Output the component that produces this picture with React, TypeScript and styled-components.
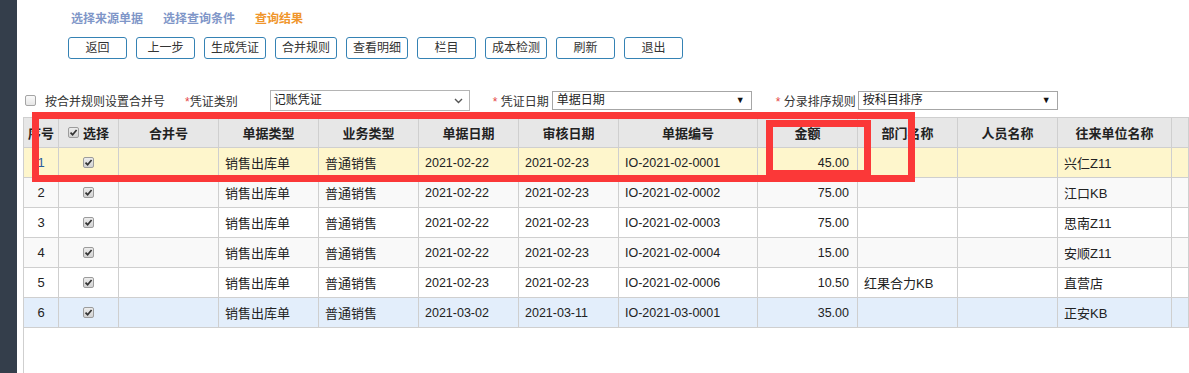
import React from 'react';
import styled, { createGlobalStyle } from 'styled-components';

const GlobalStyle = createGlobalStyle`
  html, body, #root {
    height: 100%;
  }
  body {
    margin: 0;
    background: #fff;
    color: #333;
    font-family: "Liberation Sans", "Noto Sans CJK SC", sans-serif;
    font-size: 12px;
  }
`

type Row = {
  no: number
  type: string
  biz: string
  date: string
  audit: string
  code: string
  amount: string
  dept: string
  person: string
  partner: string
}

const rows: Row[] = [
  { no: 1, type: '销售出库单', biz: '普通销售', date: '2021-02-22', audit: '2021-02-23', code: 'IO-2021-02-0001', amount: '45.00', dept: '', person: '', partner: '兴仁Z11' },
  { no: 2, type: '销售出库单', biz: '普通销售', date: '2021-02-22', audit: '2021-02-23', code: 'IO-2021-02-0002', amount: '75.00', dept: '', person: '', partner: '江口KB' },
  { no: 3, type: '销售出库单', biz: '普通销售', date: '2021-02-22', audit: '2021-02-23', code: 'IO-2021-02-0003', amount: '75.00', dept: '', person: '', partner: '思南Z11' },
  { no: 4, type: '销售出库单', biz: '普通销售', date: '2021-02-22', audit: '2021-02-23', code: 'IO-2021-02-0004', amount: '15.00', dept: '', person: '', partner: '安顺Z11' },
  { no: 5, type: '销售出库单', biz: '普通销售', date: '2021-02-23', audit: '2021-02-23', code: 'IO-2021-02-0006', amount: '10.50', dept: '红果合力KB', person: '', partner: '直营店' },
  { no: 6, type: '销售出库单', biz: '普通销售', date: '2021-03-02', audit: '2021-03-11', code: 'IO-2021-03-0001', amount: '35.00', dept: '', person: '', partner: '正安KB' },
]

const buttons = ['返回', '上一步', '生成凭证', '合并规则', '查看明细', '栏目', '成本检测', '刷新', '退出']

const rowBg = (i: number) => {
  if (i === 0) return '#fef6cc'
  if (i === 5) return '#e3eefb'
  return i % 2 === 1 ? '#f9f9f9' : '#fff'
}

const Check = ({ on = true }: { on?: boolean }) => (
  <CheckBox>
    {on && (
      <svg width="9" height="9" viewBox="0 0 9 9">
        <path d="M1.5 4.6 L3.6 6.7 L7.6 2" fill="none" stroke="#333" strokeWidth="1.7" />
      </svg>
    )}
  </CheckBox>
)

const App = () => {
  return (
    <Page>
      <GlobalStyle />
      <Sidebar />
      <Main>
        <TabBar>
          <Tab>选择来源单据</Tab>
          <Tab>选择查询条件</Tab>
          <Tab active>查询结果</Tab>
        </TabBar>
        <ButtonBar>
          {buttons.map(b => <Button key={b}>{b}</Button>)}
        </ButtonBar>
        <FilterRow>
          <PlainBox />
          <FilterLabel gap={9}>按合并规则设置合并号</FilterLabel>
          <FilterLabel gap={20}><Star>*</Star>凭证类别</FilterLabel>
          <Select gap={32} tall>
            记账凭证
            <Chevron>
              <svg width="9" height="6" viewBox="0 0 9 6">
                <path d="M1 1 L4.5 4.5 L8 1" fill="none" stroke="#555" strokeWidth="1.4" />
              </svg>
            </Chevron>
          </Select>
          <FilterLabel gap={23}><Star>*</Star> 凭证日期</FilterLabel>
          <Select gap={3}>
            单据日期
            <Arrow>▼</Arrow>
          </Select>
          <FilterLabel gap={24}><Star>*</Star> 分录排序规则</FilterLabel>
          <Select gap={2}>
            按科目排序
            <Arrow>▼</Arrow>
          </Select>
        </FilterRow>
        <Grid>
          <HeadRow>
            <Head>序号</Head>
            <Head><Check /> 选择</Head>
            <Head>合并号</Head>
            <Head>单据类型</Head>
            <Head>业务类型</Head>
            <Head>单据日期</Head>
            <Head>审核日期</Head>
            <Head>单据编号</Head>
            <Head>金额</Head>
            <Head>部门名称</Head>
            <Head>人员名称</Head>
            <Head>往来单位名称</Head>
            <Head />
          </HeadRow>
          {rows.map((r, i) => (
            <BodyRow key={r.no} bg={rowBg(i)}>
              <Cell center selected={i === 0}>{r.no}</Cell>
              <Cell center><Check /></Cell>
              <Cell />
              <Cell>{r.type}</Cell>
              <Cell>{r.biz}</Cell>
              <Cell num>{r.date}</Cell>
              <Cell num>{r.audit}</Cell>
              <Cell num>{r.code}</Cell>
              <Cell num right>{r.amount}</Cell>
              <Cell>{r.dept}</Cell>
              <Cell>{r.person}</Cell>
              <Cell>{r.partner}</Cell>
              <Cell />
            </BodyRow>
          ))}
        </Grid>
      </Main>
      <Mark style={{ left: 32, top: 112, width: 883, height: 70 }} />
      <Mark style={{ left: 766, top: 120, width: 105, height: 57 }} />
    </Page>
  )
}

export default App;

const cols = '35px 60px 100px 100px 100px 100px 100px 139px 100px 100px 100px 114px 1fr'

const Page = styled.div`
  position: relative;
  display: flex;
  height: 100%;
  overflow: hidden;
`

const Sidebar = styled.div`
  width: 17px;
  flex-shrink: 0;
  background: #343e4b;
`

const Main = styled.div`
  flex: 1;
  display: flex;
  flex-direction: column;
  padding-left: 6px;
  min-width: 0;
`

const TabBar = styled.div`
  height: 34px;
  display: flex;
  align-items: center;
  gap: 20px;
  padding-left: 48px;
`

const Tab = styled.span<{ active?: boolean }>`
  font-size: 12px;
  font-weight: bold;
  color: ${p => (p.active ? '#f0962c' : '#7f96c8')};
`

const ButtonBar = styled.div`
  display: flex;
  gap: 9px;
  margin-top: 3px;
  padding-left: 45px;
`

const Button = styled.div`
  box-sizing: border-box;
  min-width: 59px;
  height: 22px;
  padding: 0 6px;
  border: 1px solid #3582b4;
  border-radius: 3px;
  background: #fff;
  color: #333;
  font-size: 12px;
  line-height: 20px;
  text-align: center;
`

const FilterRow = styled.div`
  display: flex;
  align-items: center;
  height: 21px;
  margin-top: 31px;
  padding-left: 2px;
`

const PlainBox = styled.span`
  box-sizing: border-box;
  width: 11px;
  height: 11px;
  border: 1px solid #a5a5a5;
  border-radius: 2px;
  background: linear-gradient(#fafafa, #e6e6e6);
`

const FilterLabel = styled.span<{ gap: number }>`
  margin-left: ${p => p.gap}px;
  font-size: 12px;
  color: #333;
  white-space: nowrap;
`

const Star = styled.span`
  color: #e54848;
`

const Select = styled.div<{ gap: number; tall?: boolean }>`
  position: relative;
  box-sizing: border-box;
  width: 200px;
  height: ${p => (p.tall ? 21 : 19)}px;
  margin-left: ${p => p.gap}px;
  padding-left: ${p => (p.tall ? 3 : 4)}px;
  border: 1px solid ${p => (p.tall ? '#b4b4b4' : '#a6a6a6')};
  background: #fff;
  font-size: 12px;
  line-height: ${p => (p.tall ? 19 : 17)}px;
  color: #222;
  display: flex;
  align-items: center;
  justify-content: space-between;
`

const Chevron = styled.span`
  display: flex;
  margin-right: 6px;
`

const Arrow = styled.span`
  font-size: 9px;
  margin-right: 6px;
  color: #111;
`

const Grid = styled.div`
  flex: 1;
  margin-top: 6px;
  border-top: 1px solid #cfcfcf;
  border-left: 1px solid #cfcfcf;
`

const HeadRow = styled.div`
  display: grid;
  grid-template-columns: ${cols};
  height: 30px;
  background: #e7e7e7;
`

const Head = styled.div`
  display: flex;
  align-items: center;
  justify-content: center;
  gap: 4px;
  border-right: 1px solid #cfcfcf;
  border-bottom: 1px solid #cfcfcf;
  font-size: 13px;
  font-weight: bold;
  color: #222;
  white-space: nowrap;
`

const BodyRow = styled.div<{ bg: string }>`
  display: grid;
  grid-template-columns: ${cols};
  height: 30px;
  background: ${p => p.bg};
`

const Cell = styled.div<{ center?: boolean; right?: boolean; num?: boolean; selected?: boolean }>`
  display: flex;
  align-items: center;
  justify-content: ${p => (p.center ? 'center' : p.right ? 'flex-end' : 'flex-start')};
  padding: 0 ${p => (p.right ? 8 : p.center ? 0 : 6)}px;
  border-right: 1px solid #cfcfcf;
  border-bottom: 1px solid #cfcfcf;
  font-size: ${p => (p.num ? 12.5 : 13)}px;
  color: ${p => (p.selected ? '#2b5d9c' : '#222')};
  white-space: nowrap;
  overflow: hidden;
`

const CheckBox = styled.span`
  box-sizing: border-box;
  width: 11px;
  height: 11px;
  border: 1px solid #9c9c9c;
  border-radius: 2px;
  background: linear-gradient(#ececec, #d2d2d2);
  display: inline-flex;
  align-items: center;
  justify-content: center;
`

const Mark = styled.div`
  position: absolute;
  box-sizing: border-box;
  border: 7px solid #fb3838;
  pointer-events: none;
`
